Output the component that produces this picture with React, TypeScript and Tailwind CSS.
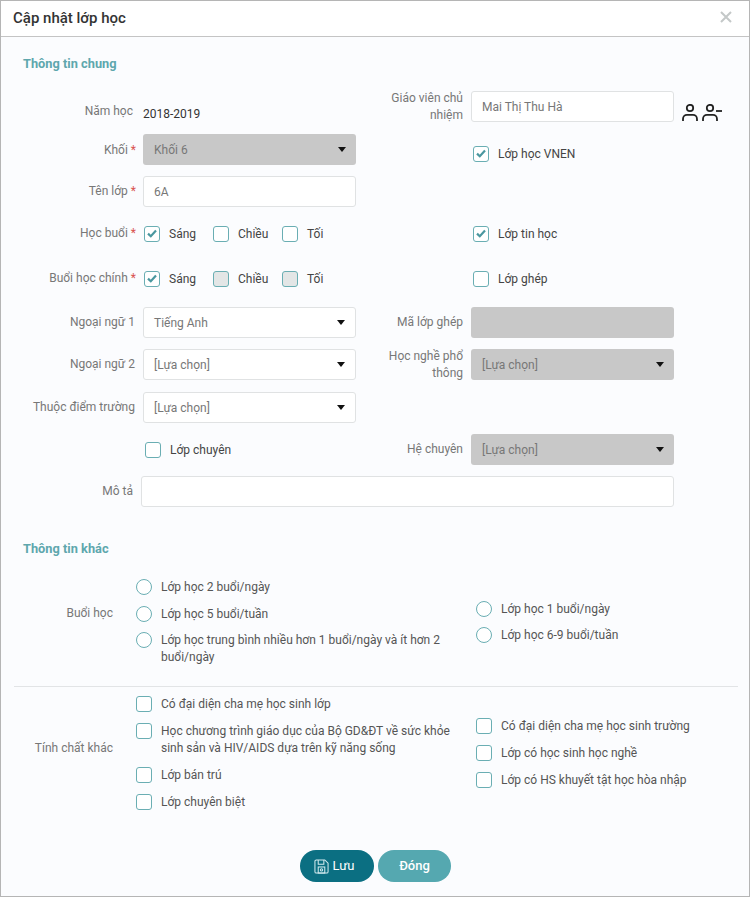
import React from "react";

const font = "font-['Roboto',sans-serif]";

function Check({ on, disabled }: { on?: boolean; disabled?: boolean }) {
  return (
    <span
      className={`flex h-4 w-4 shrink-0 items-center justify-center rounded-[3px] border border-[#6aaeb3] ${
        disabled ? "bg-[#e3e6e6]" : "bg-white"
      }`}
    >
      {on && (
        <svg width="10" height="9" viewBox="0 0 10 9">
          <path d="M1 4.6 L3.8 7.2 L9 1.6" fill="none" stroke="#4a979f" strokeWidth="2.2" />
        </svg>
      )}
    </span>
  );
}

function CheckLabel({ label, on, disabled, w }: { label: string; on?: boolean; disabled?: boolean; w?: string }) {
  return (
    <div className={`flex items-center gap-[9px] ${w ?? ""}`}>
      <Check on={on} disabled={disabled} />
      <span className="text-[#444]">{label}</span>
    </div>
  );
}

function Req() {
  return <span className="ml-[3px] text-[#d9534f]">*</span>;
}

function Label({ children, w = "w-[135px]", className = "" }: { children: React.ReactNode; w?: string; className?: string }) {
  return <div className={`${w} shrink-0 text-right leading-[17px] text-[#777] ${className}`}>{children}</div>;
}

function Select({ value, gray, w = "w-[213px]" }: { value: string; gray?: boolean; w?: string }) {
  return (
    <div
      className={`flex h-[31px] ${w} items-center justify-between rounded-[3px] pr-[10px] text-[#777] ${
        gray ? "bg-[#c8c8c8] pl-[11px]" : "border border-[#e0e2e3] bg-white pl-[10px]"
      }`}
    >
      <span>{value}</span>
      <span className="h-0 w-0 border-x-[4px] border-t-[5px] border-x-transparent border-t-[#111]" />
    </div>
  );
}

function Input({ value, w = "w-[213px]" }: { value?: string; w?: string }) {
  return (
    <div className={`flex h-[31px] ${w} items-center rounded-[3px] border border-[#e0e2e3] bg-white pl-[10px] text-[#777]`}>
      {value}
    </div>
  );
}

function Row({ left, right, className = "" }: { left?: React.ReactNode; right?: React.ReactNode; className?: string }) {
  return (
    <div className={`flex h-[31px] items-center ${className}`}>
      <div className="flex w-[370px] shrink-0 items-center gap-[7px]">{left}</div>
      <div className="flex items-center gap-2">{right}</div>
    </div>
  );
}

function Radio({ label }: { label: React.ReactNode }) {
  return (
    <div className="flex items-start gap-[9px]">
      <span className="h-4 w-4 shrink-0 rounded-full border border-[#6aaeb3] bg-white" />
      <span className="leading-[17px] text-[#555]">{label}</span>
    </div>
  );
}

function BoxOption({ label }: { label: string }) {
  return (
    <div className="flex items-start gap-[9px]">
      <Check />
      <span className="leading-[17px] text-[#555]">{label}</span>
    </div>
  );
}

function UserIcon({ minus }: { minus?: boolean }) {
  return (
    <svg width={minus ? 20 : 16} height="17" viewBox={minus ? "0 0 20 17" : "0 0 16 17"} fill="none" stroke="#222" strokeWidth="1.8">
      <circle cx="8" cy="4" r="3.2" />
      <path d="M1 17 V15 C1 12.4 3 10.8 5 10.8 H11 C13 10.8 15 12.4 15 15 V17" />
      {minus && <path d="M14 7 H20" />}
    </svg>
  );
}

export default function App() {
  return (
    <div className={`${font} h-[897px] w-[750px] border border-[#b5b5b5] bg-[#fbfcfe] text-[12px]`}>
      <div className="flex h-[36px] items-center justify-between border-b border-[#c4c4c4] bg-white pl-3 pr-[17px]">
        <span className="text-[15px] font-medium text-[#333]">Cập nhật lớp học</span>
        <svg className="mb-[3px]" width="12" height="12" viewBox="0 0 12 12">
          <path d="M1 1 L11 11 M11 1 L1 11" stroke="#c4c8c8" strokeWidth="2" />
        </svg>
      </div>

      <div className="pt-[19px]">
        <h3 className="pl-[22px] text-[12.8px] font-bold leading-4 text-[#5ea7ad]">Thông tin chung</h3>

        <Row
          className="mt-[19px]"
          left={
            <>
              <Label w="w-[132px]" className="mt-[10px]">Năm học</Label>
              <span className="ml-[3px] mt-[14px] text-[#333]">2018-2019</span>
            </>
          }
          right={
            <>
              <Label w="w-[92px]">Giáo viên chủ nhiệm</Label>
              <Input value="Mai Thị Thu Hà" w="w-[203px]" />
              <div className="mt-[12px] flex gap-[4px]">
                <UserIcon />
                <UserIcon minus />
              </div>
            </>
          }
        />

        <Row
          className="mt-[12px]"
          left={
            <>
              <Label className="mt-[2px]">
                Khối
                <Req />
              </Label>
              <Select value="Khối 6" gray />
            </>
          }
          right={
            <div className="ml-[102px] mt-[8px]">
              <CheckLabel label="Lớp học VNEN" on />
            </div>
          }
        />

        <Row
          className="mt-[11px]"
          left={
            <>
              <Label>
                Tên lớp
                <Req />
              </Label>
              <Input value="6A" />
            </>
          }
        />

        <Row
          className="mt-[11px]"
          left={
            <>
              <Label>
                Học buổi
                <Req />
              </Label>
              <div className="ml-[1px] flex">
                <CheckLabel label="Sáng" on w="w-[69px]" />
                <CheckLabel label="Chiều" w="w-[69px]" />
                <CheckLabel label="Tối" />
              </div>
            </>
          }
          right={
            <div className="ml-[102px]">
              <CheckLabel label="Lớp tin học" on />
            </div>
          }
        />

        <Row
          className="mt-[14px]"
          left={
            <>
              <Label>
                Buổi học chính
                <Req />
              </Label>
              <div className="ml-[1px] flex">
                <CheckLabel label="Sáng" on w="w-[69px]" />
                <CheckLabel label="Chiều" disabled w="w-[69px]" />
                <CheckLabel label="Tối" disabled />
              </div>
            </>
          }
          right={
            <div className="ml-[102px] mt-[1px]">
              <CheckLabel label="Lớp ghép" />
            </div>
          }
        />

        <Row
          className="mt-[13px]"
          left={
            <>
              <Label className="pr-[1px]">Ngoại ngữ 1</Label>
              <Select value="Tiếng Anh" />
            </>
          }
          right={
            <>
              <Label w="w-[92px]">Mã lớp ghép</Label>
              <div className="h-[31px] w-[203px] rounded-[3px] bg-[#c8c8c8]" />
            </>
          }
        />

        <Row
          className="mt-[11px]"
          left={
            <>
              <Label className="pr-[1px]">Ngoại ngữ 2</Label>
              <Select value="[Lựa chọn]" />
            </>
          }
          right={
            <>
              <Label w="w-[92px]">Học nghề phổ thông</Label>
              <Select value="[Lựa chọn]" gray w="w-[203px]" />
            </>
          }
        />

        <Row
          className="mt-[12px]"
          left={
            <>
              <Label className="pr-[1px]">Thuộc điểm trường</Label>
              <Select value="[Lựa chọn]" />
            </>
          }
        />

        <Row
          className="mt-[11px]"
          left={
            <div className="ml-[144px]">
              <CheckLabel label="Lớp chuyên" />
            </div>
          }
          right={
            <>
              <Label w="w-[92px]">Hệ chuyên</Label>
              <Select value="[Lựa chọn]" gray w="w-[203px]" />
            </>
          }
        />

        <div className="mt-[11px] flex h-[31px] items-center gap-[8px]">
          <Label w="w-[132px]">Mô tả</Label>
          <Input w="w-[533px]" />
        </div>

        <h3 className="mt-[34px] pl-[22px] text-[12.8px] font-bold leading-4 text-[#5ea7ad]">Thông tin khác</h3>

        <div className="mt-[22px] flex items-center">
          <div className="mb-[20px] w-[112px] shrink-0 text-right text-[#777]">Buổi học</div>
          <div className="ml-[23px] flex w-[340px] shrink-0 flex-col gap-[9.5px] pr-[20px]">
            <Radio label="Lớp học 2 buổi/ngày" />
            <Radio label="Lớp học 5 buổi/tuần" />
            <Radio label="Lớp học trung bình nhiều hơn 1 buổi/ngày và ít hơn 2 buổi/ngày" />
          </div>
          <div className="flex flex-col gap-[9.5px]">
            <Radio label="Lớp học 1 buổi/ngày" />
            <Radio label="Lớp học 6-9 buổi/tuần" />
          </div>
        </div>

        <hr className="ml-[13px] mr-[11px] mt-[20px] border-[#e2e4e6]" />

        <div className="mt-[9px] flex items-center">
          <div className="mt-[-12px] w-[112px] shrink-0 text-right text-[#777]">Tính chất khác</div>
          <div className="ml-[23px] flex w-[340px] shrink-0 flex-col gap-[10px] pr-[20px]">
            <BoxOption label="Có đại diện cha mẹ học sinh lớp" />
            <BoxOption label="Học chương trình giáo dục của Bộ GD&ĐT về sức khỏe sinh sản và HIV/AIDS dựa trên kỹ năng sống" />
            <BoxOption label="Lớp bán trú" />
            <BoxOption label="Lớp chuyên biệt" />
          </div>
          <div className="mt-[-1px] flex flex-col gap-[10px]">
            <BoxOption label="Có đại diện cha mẹ học sinh trường" />
            <BoxOption label="Lớp có học sinh học nghề" />
            <BoxOption label="Lớp có HS khuyết tật học hòa nhập" />
          </div>
        </div>

        <div className="ml-[1px] mt-[39px] flex justify-center gap-[4px]">
          <button className="flex h-[32px] w-[74px] items-center justify-center gap-[4px] rounded-full bg-[#0b6f82] pr-[6px] text-[13px] text-white">
            <svg width="15" height="15" viewBox="0 0 16 16" fill="none" stroke="#d5ecef" strokeWidth="1.1">
              <path d="M1 2.5 a1.5 1.5 0 0 1 1.5 -1.5 H11.5 L15 4.5 V13.5 a1.5 1.5 0 0 1 -1.5 1.5 H2.5 a1.5 1.5 0 0 1 -1.5 -1.5 Z" />
              <path d="M4.5 1 V5.5 H10.5 V1" />
              <rect x="4.5" y="8.5" width="7" height="6.5" />
              <circle cx="8" cy="11.6" r="1.2" />
            </svg>
            Lưu
          </button>
          <button className="h-[32px] w-[73px] rounded-full bg-[#55a8b0] text-[13px] font-medium text-white">Đóng</button>
        </div>
      </div>
    </div>
  );
}
